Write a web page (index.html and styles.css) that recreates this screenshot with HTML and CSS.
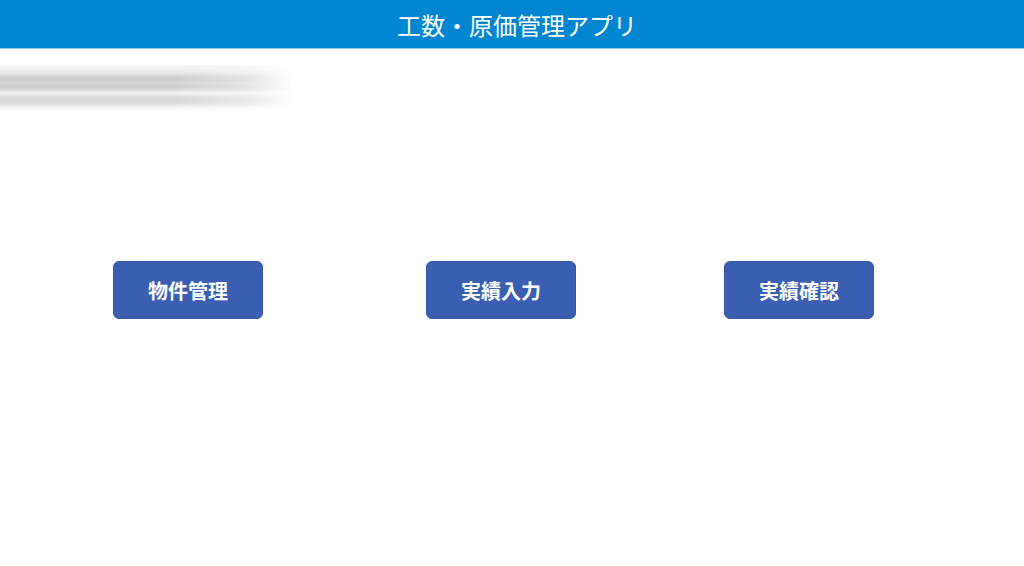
FILE: index.html
```html
<!DOCTYPE html>
<html lang="ja">
<head>
    <meta charset="UTF-8">
    <meta name="viewport" content="width=device-width, initial-scale=1.0">
    <title>工数・原価管理アプリ</title>
    <link rel="stylesheet" href="styles.css">
</head>
<body>
    <header class="app-header">
        <h1>工数・原価管理アプリ</h1>
    </header>

    <div class="streak-area">
        <div class="streak"></div>
    </div>

    <main class="menu">
        <button class="menu-button">物件管理</button>
        <button class="menu-button second">実績入力</button>
        <button class="menu-button third">実績確認</button>
    </main>
</body>
</html>
```

FILE: styles.css
```css
body {
    font-family: "Noto Sans CJK JP", "Noto Sans", sans-serif;
    background-color: #fff;
    margin: 0;
    overflow: hidden;
}
.app-header {
    height: 48px;
    background-color: #0086d1;
    border-bottom: 1px solid #8cc4ea;
    display: flex;
    justify-content: center;
    align-items: center;
}
.app-header h1 {
    margin: 0;
    color: #fff;
    font-size: 24px;
    font-weight: 400;
    padding-left: 10px;
}
.streak-area {
    height: 62px;
    padding-top: 16px;
    box-sizing: border-box;
}
/* grey motion streak under the header */
.streak {
    width: 292px;
    height: 46px;
    background: linear-gradient(to bottom,
        #f6f6f6 0px, #efefef 4px, #e6e6e6 8px,
        #d6d6d6 11px, #cdcdcd 14px, #d5d5d5 18px,
        #cfcfcf 22px, #d9d9d9 25px,
        #eeeeee 27px, #f0f0f0 29px,
        #dbdbdb 32px, #d7d7d7 36px, #e0e0e0 39px,
        #f2f2f2 42px, #ffffff 46px);
    -webkit-mask-image: linear-gradient(to right, #000 0%, #000 60%, rgba(0, 0, 0, 0.6) 85%, rgba(0, 0, 0, 0) 100%);
    mask-image: linear-gradient(to right, #000 0%, #000 60%, rgba(0, 0, 0, 0.6) 85%, rgba(0, 0, 0, 0) 100%);
    filter: blur(0.6px);
}
.menu {
    display: flex;
    padding: 150px 0 0 113px;
}
.menu-button {
    width: 150px;
    height: 58px;
    background-color: #3a5fb0;
    border: 1px solid #34569f;
    border-radius: 6px;
    color: #fff;
    font-family: inherit;
    font-size: 20px;
    font-weight: 700;
    cursor: pointer;
}
.menu-button:hover {
    background-color: #2f519b;
}
.second {
    margin-left: 163px;
}
.third {
    margin-left: 148px;
}
```
